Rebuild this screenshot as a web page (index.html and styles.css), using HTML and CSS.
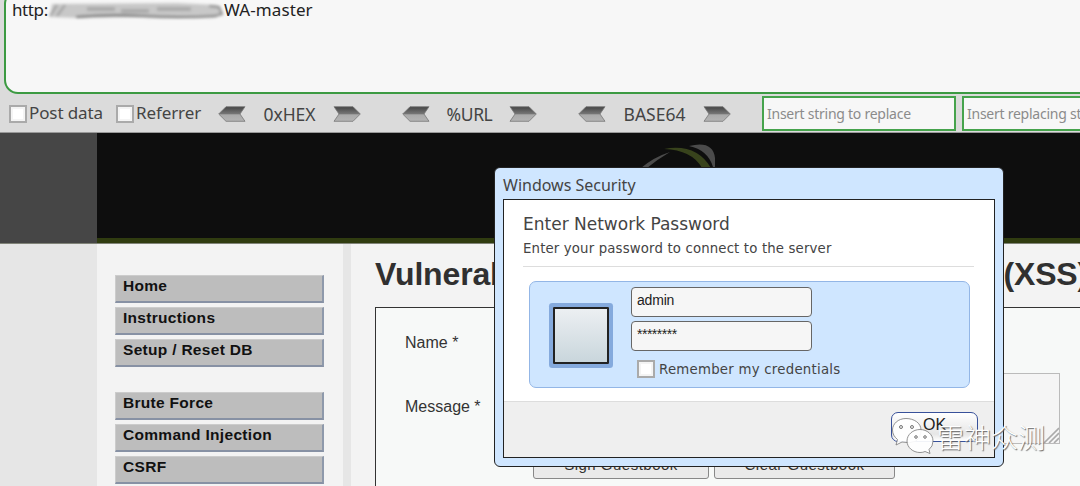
FILE: index.html
```
<!DOCTYPE html>
<html lang="en">
<head>
<meta charset="utf-8">
<title>DVWA</title>
<link rel="stylesheet" href="styles.css">
</head>
<body>
<svg class="defs" width="0" height="0">
  <defs>
    <linearGradient id="metal" x1="0" y1="0" x2="0" y2="1"><stop offset="0" stop-color="#444"/><stop offset=".5" stop-color="#777"/><stop offset=".55" stop-color="#aaa"/><stop offset="1" stop-color="#b4b4b4"/></linearGradient>
    <filter id="soft" x="-10%" y="-40%" width="120%" height="180%"><feGaussianBlur stdDeviation="1.5"/></filter>
    <symbol id="arrow" viewBox="0 0 28 16"><path d="M.7 8 8 .7H27L22 8l5 7.3H8Z" fill="url(#metal)" stroke="#777" stroke-width=".8"/></symbol>
  </defs>
</svg>
<section class="hackbar">
  <div class="url-box"><span class="url-start">http:</span><svg class="smudge" width="180" height="24" viewBox="0 0 180 24"><g filter="url(#soft)"><path d="M5 4 130 3 170 5 176 15 30 18 3 17Z" fill="#c8c8c8"/><path d="m3 16 7-11M10 16l8-11" stroke="#999" stroke-width="2"/><path d="M29 17Q60 14 95 16T170 16" fill="none" stroke="#666" stroke-width="2"/><path d="M40 9h28M74 11h28M110 9h34" stroke="#aaa" stroke-width="4"/><path d="m162 6 10 1 3 7-7 2" fill="none" stroke="#888" stroke-width="2"/></g></svg><span class="url-end">WA-master</span></div>
  <div class="tools">
    <label class="option post"><i class="check"></i><span>Post data</span></label>
    <label class="option ref"><i class="check"></i><span>Referrer</span></label>
    <div class="codec hex"><svg class="arrow"><use href="#arrow"/></svg><span>0xHEX</span><svg class="arrow right"><use href="#arrow"/></svg></div>
    <div class="codec url"><svg class="arrow"><use href="#arrow"/></svg><span>%URL</span><svg class="arrow right"><use href="#arrow"/></svg></div>
    <div class="codec base"><svg class="arrow"><use href="#arrow"/></svg><span>BASE64</span><svg class="arrow right"><use href="#arrow"/></svg></div>
    <div class="replace">Insert string to replace</div>
    <div class="replace second">Insert replacing string</div>
  </div>
</section>
<header class="banner">
  <div class="brand">
    <svg class="swoosh" width="90" height="40" viewBox="0 0 90 40"><path d="M11 35Q24 24 40 19 28 26 17 35Z" fill="#4b4b4b"/><path d="M34 16Q66 10 81 35H72Q62 17 34 16Z" fill="#38431c"/><path d="M59 13Q83 7 85 25V34H83Q78 17 59 13Z" fill="#4b4b4b"/></svg>
  </div>
</header>
<main class="page">
  <nav class="menu">
    <ul><li>Home</li><li>Instructions</li><li>Setup / Reset DB</li></ul>
    <ul><li>Brute Force</li><li>Command Injection</li><li>CSRF</li></ul>
  </nav>
  <article class="content">
    <h1>Vulnerability: Stored Cross Site Scripting (XSS)</h1>
    <div class="form">
      <div class="row"><span>Name *</span></div>
      <div class="row message"><span>Message *</span><div class="textarea"><svg width="16" height="16" viewBox="0 0 16 16"><path d="M1 16 16 1M6 16 16 6M11 16l5-5" stroke="#aaa" stroke-width="1.6"/></svg></div></div>
      <div class="actions"><div class="button">Sign Guestbook</div><div class="button clear">Clear Guestbook</div></div>
    </div>
  </article>
</main>
<section class="dialog">
  <div class="caption">Windows Security</div>
  <div class="panel">
    <div class="panel-main">
      <h2>Enter Network Password</h2>
      <p>Enter your password to connect to the server</p>
      <div class="login">
        <div class="avatar"></div>
        <div class="fields">
          <div class="field">admin</div>
          <div class="field stars">********</div>
          <label class="remember"><i class="check"></i><span>Remember my credentials</span></label>
        </div>
      </div>
    </div>
    <div class="footer"><div class="ok">OK</div></div>
  </div>
</section>
<div class="watermark">
  <svg width="44" height="38" viewBox="0 0 44 38"><g fill="#fff" fill-opacity=".93" stroke="#777" stroke-width=".8"><path d="M15 1.500C7 1.500 1.500 7 1.500 13c0 4 2 7 5 9.500L5 28l6-3q8 2 14-1 5-4 5-11C30 6 23 1.500 15 1.500Z"/><path d="M29 12.500c-7 0-13 5-13 11.500s6 11.500 13 11.500q3 0 5-1l5 2-1-4q4-3 4-8.500C42 17.500 36 12.500 29 12.500Z"/></g><g fill="#eee" stroke="#777" stroke-width="1"><circle cx="10" cy="10" r="1.500"/><circle cx="21" cy="10" r="1.500"/><circle cx="25" cy="20" r="1.300"/><circle cx="34" cy="20" r="1.300"/></g></svg>
  <span>雷神众测</span>
</div>
</body>
</html>
```
FILE: styles.css
```
* { box-sizing: border-box; }
body { margin: 0; width: 1080px; height: 486px; overflow: hidden; position: relative; font-family: "Liberation Sans", Arial, sans-serif; color: #333; background: #e6e6e6; }
.defs { position: absolute; }
.hackbar { height: 133px; background: #dbdbdb; border-bottom: 1px solid #999; font: 17px/20px "Noto Sans", sans-serif; color: #444; overflow: hidden; }
.url-box { display: flex; height: 104px; width: 1100px; margin: -10px 0 0 4px; padding: 10px 0 0 6px; border: 2px solid #3c9a42; border-radius: 14px; background: #f7f7f7; color: #222; font-size: 17px; line-height: 20px; }
.url-box span { flex: none; margin-top: -2px; }
.url-start { width: 34px; letter-spacing: -.4px; }
.smudge { flex: none; margin: -2px 0 0 1px; }
.url-end { margin-left: -3px; letter-spacing: .1px; }
.tools { display: flex; align-items: center; height: 39px; padding-left: 9px; white-space: nowrap; }
.option { display: flex; align-items: center; gap: 2px; flex: none; letter-spacing: -.1px; }
.option span { position: relative; top: -1px; }
.post { width: 107px; }
.ref { width: 102px; }
.check { flex: none; width: 18px; height: 18px; border: 2px solid #aaa; background: #fff; box-shadow: inset 0 0 0 2px #f4f4f4; }
.codec { display: flex; align-items: center; justify-content: space-between; flex: none; height: 20px; font-size: 17.5px; }
.hex { width: 143px; }
.url { width: 135px; margin-left: 41px; }
.url span { letter-spacing: -.4px; }
.base { width: 153px; margin-left: 41px; }
.arrow { width: 28px; height: 16px; flex: none; }
.right { transform: scaleX(-1); }
.replace { flex: none; width: 194px; height: 35px; margin-left: 31px; padding-left: 3px; border: 2px solid #46a34c; background: #f7f7f7; color: #8b8b8b; font-size: 14px; letter-spacing: -.25px; line-height: 31px; }
.second { margin-left: 6px; }
.banner { display: flex; height: 111px; padding-left: 97px; background: #464646; border-bottom: 1px solid #808378; }
.brand { flex: 1; background: #0e0e0e; border-bottom: 5px solid #303c10; }
.swoosh { display: block; margin: 0 0 0 533px; }
.page { display: flex; height: 242px; padding-left: 97px; }
.menu { width: 246px; padding: 31px 0 0 18px; background: #f3f3f3; }
.menu ul { list-style: none; margin: 0 0 25px; padding: 0; display: flex; flex-direction: column; gap: 4px; }
.menu li { width: 209px; height: 28px; padding: 1px 7px; border: 1px solid #ccc; border-right: 2px solid #8e99ab; border-bottom: 2px solid #8791a4; background: #bdbdbd; color: #111; font-weight: bold; font-size: 15.5px; line-height: 17px; letter-spacing: .3px; }
.content { flex: 1; min-width: 0; margin-left: 8px; padding: 9px 0 0 24px; background: #f3f3f3; overflow: hidden; }
h1 { margin: 0; height: 54px; font-size: 32px; line-height: 42px; white-space: nowrap; color: #303030; letter-spacing: -.16px; }
.form { width: 730px; height: 240px; padding: 25px 28px 25px 29px; border: 1px solid #333; background: #f7f9f8; font-size: 16px; }
.row { display: flex; height: 40px; line-height: 20px; }
.row span { width: 128px; flex: none; }
.message { height: 80px; }
.message span { padding-top: 24px; }
.textarea { display: flex; align-items: flex-end; justify-content: flex-end; width: 527px; height: 71px; border: 1px solid #bbb; background: #f5f5f5; }
.actions { display: flex; gap: 5px; padding-left: 128px; }
.button { width: 176px; height: 27px; margin-top: -1px; border: 1px solid #888; border-radius: 3px; background: #eaeaea; text-align: center; line-height: 23px; font-size: 15px; letter-spacing: .5px; }
.clear { width: 181px; }
.dialog { position: absolute; left: 494px; top: 167px; width: 510px; height: 300px; padding: 0 8px; border: 1px solid #222; border-radius: 6px; background: #cfe6ff; font-family: "DejaVu Sans", sans-serif; color: #444; }
.caption { height: 31px; font: 16px/34px "Noto Sans", sans-serif; }
.panel { height: 259px; border: 1px solid #222; background: #fff; }
.panel-main { height: 201px; padding: 14px 20px 0 19px; }
h2 { margin: 0; height: 22px; font-size: 17px; font-weight: 400; line-height: 20px; }
p { margin: 0; height: 31px; border-bottom: 1px solid #ddd; font-size: 13.3px; line-height: 25px; letter-spacing: .15px; white-space: nowrap; }
.login { display: flex; width: 441px; height: 107px; margin: 14px 0 0 6px; padding: 5px 19px; border: 1px solid #93b6e6; border-radius: 7px; background: #cfe6ff; }
.avatar { width: 56px; height: 57px; margin: 20px 22px 0 4px; border: 2px solid #222; background: linear-gradient(#eceff2, #c9d6dc); box-shadow: 0 0 0 4px #85aadd; border-radius: 1px; flex: none; }
.field { width: 181px; height: 30px; margin-bottom: 4px; padding-left: 5px; border: 1px solid #666; border-radius: 4px; background: #f6f6f6; color: #222; font: 14px/25px "Liberation Sans", sans-serif; letter-spacing: -.2px; }
.stars { letter-spacing: -.5px; }
.remember { display: flex; align-items: center; gap: 4px; padding: 5px 0 0 6px; font-size: 13.3px; letter-spacing: .25px; white-space: nowrap; }
.footer { display: flex; justify-content: flex-end; height: 56px; padding: 10px 16px 0 0; border-top: 1px solid #ddd; background: #efefef; }
.ok { width: 87px; height: 30px; border: 1.5px solid #38519a; border-radius: 7px; background: linear-gradient(#fff, #e6e6e6 75%, #fff); color: #222; text-align: center; font: 16px/24px "Liberation Sans", sans-serif; }
.watermark { position: absolute; left: 891px; top: 417px; display: flex; color: #fff; font: 27px/40px "Noto Sans CJK SC", sans-serif; text-shadow: 1px 1px 1px #666; }
.watermark span { margin-left: 2px; white-space: nowrap; font-weight: 300; }
```
